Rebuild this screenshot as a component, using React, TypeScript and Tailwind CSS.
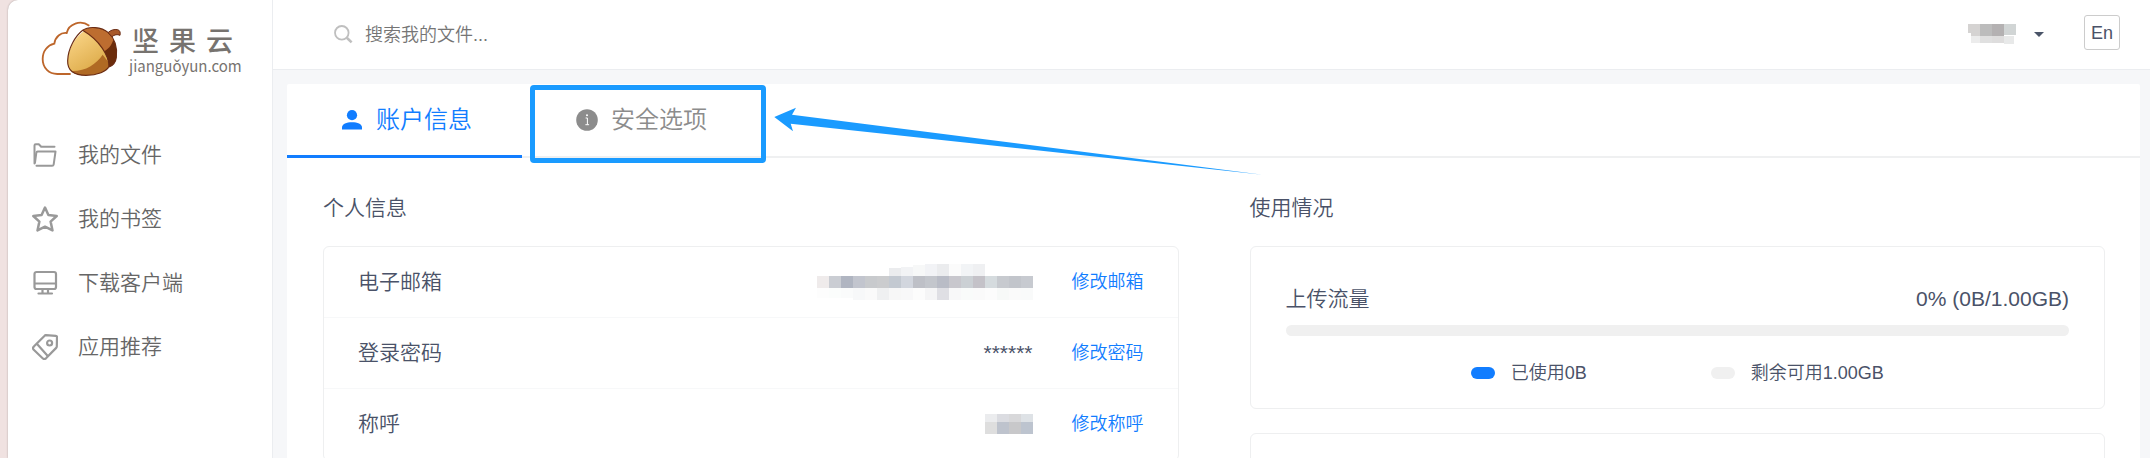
import React from "react";

type Cell = [x: number, y: number, w: number, h: number, fill: string];

const emailCells: Cell[] = [
  ...["#ebecee", "#f2f3f5", "#f7f8f8", "#f2f3f6", "#ebecee", "#fbfbfb", "#f2f4f6", "#eff0f2"].map(
    (c, i): Cell => [72 + i * 12, i < 1 ? 4 : i < 2 ? 3 : i < 3 ? 1 : 0, 12, i < 1 ? 8 : i < 2 ? 9 : i < 3 ? 11 : 12, c],
  ),
  ...["#efebeb", "#cacdd3", "#b0b5c1", "#c2c5ce", "#c8cacd", "#cbccce", "#c3c9d1", "#d2d6de", "#bec0c7", "#c3c6cc", "#b9bcc6", "#c8c7cd", "#cbd0d4", "#c4c2c8", "#d5dbde", "#c7cacf", "#c2c5cb", "#c7cad0"].map(
    (c, i): Cell => [i * 12, 12, 12, 12, c],
  ),
  ...["#fdfdfd", "#fbfdfc", "#fafbfb", "#f7f8f9", "#fafafa", "#eff0f1", "#f7f7f7", "#f8f8f9", "#fcfcfc", "#f5f5f6", "#dfdfe4", "#f8f8f9", "#f9fbfa", "#fafafa", "#fcfcfc", "#f7f9f8", "#fafafa", "#f9fafa"].map(
    (c, i): Cell => [i * 12, 24, 12, i < 3 ? 10 : 12, c],
  ),
];

const nameCells: Cell[] = [
  [0, 0, 12, 8, "#ebecee"], [12, 0, 12, 8, "#dbdce1"], [24, 0, 12, 8, "#d8d8da"], [36, 0, 12, 8, "#dee2e6"],
  [0, 8, 12, 12, "#dedede"], [12, 8, 12, 12, "#bec3cd"], [24, 8, 12, 12, "#c8c8ca"], [36, 8, 12, 12, "#bdc4cf"],
];

const userCells: Cell[] = [
  [0, 0, 12, 9, "#d5d3d2"], [3, 9, 9, 3, "#d5d3d2"], [12, 0, 12, 12, "#bcbcbc"], [24, 0, 12, 12, "#b4b1b2"], [36, 0, 12, 11, "#d1d5d5"],
  [3, 12, 9, 7, "#ececec"], [12, 12, 12, 7, "#e0e0e0"], [24, 12, 12, 7, "#dedddd"], [36, 12, 10, 8, "#e8e9e9"],
];

function Mosaic({ cells, width, height, label }: { cells: Cell[]; width: number; height: number; label: string }) {
  return (
    <svg width={width} height={height} role="img" aria-label={label} shapeRendering="crispEdges" className="shrink-0">
      {cells.map(([x, y, w, h, fill], i) => (
        <rect key={i} x={x} y={y} width={w} height={h} fill={fill} />
      ))}
    </svg>
  );
}

function AcornLogo() {
  return (
    <svg viewBox="120 60 249 174" className="h-[58px] w-[83px] shrink-0" aria-hidden="true">
      <defs>
        <linearGradient id="nut" x1="0" y1="0" x2="0.6" y2="1">
          <stop offset="0" stopColor="#fdd98d" />
          <stop offset="1" stopColor="#dba845" />
        </linearGradient>
        <clipPath id="nutClip">
          <path d="M252 93C230 108 204 145 203 182C202 212 222 226 258 226C292 226 321 214 327 199C328 165 300 120 252 93Z" />
        </clipPath>
        <clipPath id="capClip">
          <path d="M248 91C266 78 304 80 325 98C345 116 352 145 349 172C347 187 340 196 327 201C328 166 298 121 248 91Z" />
        </clipPath>
      </defs>
      <path d="M268 77C255 68 238 66 226 71C212 76 203 86 200 99C182 97 166 110 163 131C142 136 128 153 128 177C128 204 147 222 172 222L212 222" fill="none" stroke="#bd662b" strokeWidth="5.5" />
      <path d="M252 93C230 108 204 145 203 182C202 212 222 226 258 226C292 226 321 214 327 199C328 165 300 120 252 93Z" fill="url(#nut)" />
      <path d="M203 212C250 218 286 196 308 164L335 200L300 232L215 232Z" fill="#b06a24" clipPath="url(#nutClip)" />
      <path d="M248 91C266 78 304 80 325 98C345 116 352 145 349 172C347 187 340 196 327 201C328 166 298 121 248 91Z" fill="#bd6d30" />
      <path d="M342 112C338 130 330 145 311 155L328 206L356 190L354 130Z" fill="#6b2c0b" clipPath="url(#capClip)" />
      <path d="M248 91C266 78 304 80 325 98C345 116 352 145 349 172C347 187 340 196 327 201C328 166 298 121 248 91C226 108 204 145 203 182C202 212 222 226 258 226C292 226 321 214 327 199" fill="none" stroke="#6b2c14" strokeWidth="3.5" />
      <path d="M324 98C332 90 343 87 353 89C360 91 362 98 360 106C352 102 343 104 336 110Z" fill="#a8592a" stroke="#6b2c14" strokeWidth="3" />
    </svg>
  );
}

const iconProps = {
  viewBox: "0 0 26 26",
  fill: "none",
  stroke: "#999",
  strokeWidth: 2.2,
  strokeLinecap: "round" as const,
  strokeLinejoin: "round" as const,
  className: "size-[26px] shrink-0",
  "aria-hidden": true,
};

const navItems = [
  {
    label: "我的文件",
    icon: (
      <svg {...iconProps} strokeWidth={2}>
        <path d="M2.5 21.5V3.5q0-1.2 1.2-1.2h3.1l2.4 2.5H22.5" />
        <path d="M3 20.5L4.3 10.8Q4.5 9.6 5.7 9.6H23.5L21.7 22.3Q21.5 23.7 20.1 23.7H4.5" />
      </svg>
    ),
  },
  {
    label: "我的书签",
    icon: (
      <svg {...iconProps} strokeWidth={2.5}>
        <path d="M13 1.6L16.4 9.1L24.7 10L18.6 15.6L20.5 24.4L13 20.7L5.5 24.4L7.4 15.6L1.3 10L9.6 9.1Z" />
      </svg>
    ),
  },
  {
    label: "下载客户端",
    icon: (
      <svg {...iconProps}>
        <rect x="2.5" y="2" width="21.5" height="17" rx="2" />
        <path d="M3 13.5H23.5M10.5 19.5V23M16 19.5V23M6.5 23.5H20" />
      </svg>
    ),
  },
  {
    label: "应用推荐",
    icon: (
      <svg {...iconProps}>
        <path d="M13.8 1.2L23.8 1.8Q25 1.9 25 3.1L24.8 12.6Q24.8 13.3 24.2 13.9L14 24.3Q12.2 25.8 10.6 24.3L1.5 15.5Q.3 14 1.8 12.6L12.4 1.9Q13 1.2 13.8 1.2ZM5.5 10.5L15.3 21.4" />
        <circle cx="17.6" cy="9" r="2.5" />
      </svg>
    ),
  },
];

const accountRows = [
  { label: "电子邮箱", value: <Mosaic cells={emailCells} width={216} height={36} label="已隐藏" />, action: "修改邮箱" },
  { label: "登录密码", value: <span>******</span>, action: "修改密码" },
  { label: "称呼", value: <Mosaic cells={nameCells} width={48} height={20} label="已隐藏" />, action: "修改称呼" },
];

function Sidebar() {
  return (
    <aside className="w-[265px] shrink-0 rounded-tl-[10px] border-r border-[#ebedf0] bg-white shadow-[0_0_2px_rgba(0,0,0,0.3)]">
      <a href="#home" className="flex h-[123px] items-start pt-5 pl-8">
        <AcornLogo />
        <div className="flex flex-col pt-[7px] pl-[6px] text-[#77736f]">
          <div className="flex gap-[10px] pl-[3px] text-[27px] leading-[30px] font-medium">
            <span>坚</span>
            <span>果</span>
            <span>云</span>
          </div>
          <span className="font-['Noto_Sans_CJK_SC',sans-serif] text-[15px] leading-[18px] font-normal">jianguǒyun.com</span>
        </div>
      </a>
      <nav>
        {navItems.map((item) => (
          <a key={item.label} href="#" className="flex h-16 items-center gap-5 pl-6 text-[21px] text-[#666]">
            {item.icon}
            {item.label}
          </a>
        ))}
      </nav>
    </aside>
  );
}

function Header() {
  return (
    <header className="flex h-[70px] shrink-0 items-center justify-between border-b border-[#ebedf0] bg-white pr-[30px] pl-[61px]">
      <label className="flex flex-1 items-center gap-3">
        <svg viewBox="0 0 19 19" className="size-[19px] shrink-0" fill="none" stroke="#bfbfbf" aria-hidden="true">
          <circle cx="7.8" cy="7.8" r="6.8" strokeWidth="1.8" />
          <path d="M12.8 12.8L17.6 17.4" strokeWidth="2.6" />
        </svg>
        <input type="text" aria-label="搜索" placeholder="搜索我的文件..." className="w-80 bg-transparent pt-[2px] text-[18px] outline-none placeholder:text-[#757575]" />
      </label>
      <div className="flex items-center">
        <button type="button" className="flex items-center gap-[18px]" aria-label="账户菜单">
          <Mosaic cells={userCells} width={48} height={21} label="已隐藏" />
          <svg viewBox="0 0 10 5" className="h-[5px] w-[10px]" fill="#4a5568" aria-hidden="true">
            <path d="M0 0H10L5 5Z" />
          </svg>
        </button>
        <button type="button" className="mb-1 ml-10 h-[35px] w-9 rounded-[3px] border border-[#ccc] pt-[2px] text-[18px]">
          En
        </button>
      </div>
    </header>
  );
}

function Tabs() {
  return (
    <div role="tablist" className="relative flex h-[74px] border-b-2 border-[#eff0f1] text-[24px]">
      <button type="button" role="tab" aria-selected="true" className="-mb-[2px] flex w-[235px] items-center gap-[14px] border-b-3 border-[#117dff] pl-[55px] text-[#117dff]">
        <svg viewBox="0 0 20 20" className="size-5" fill="currentColor" aria-hidden="true">
          <circle cx="10" cy="5.2" r="5.1" />
          <path d="M0 19.5V17.5C0 14 4.5 12.2 10 12.2S20 14 20 17.5V19.5Z" />
        </svg>
        账户信息
      </button>
      <button type="button" role="tab" aria-selected="false" className="relative flex w-[235px] items-center gap-[13px] pl-[54px] text-[#8c8c8c]">
        <svg viewBox="0 0 22 22" className="size-[22px]" aria-hidden="true">
          <circle cx="11" cy="11" r="10.8" fill="#8c8c8c" />
          <path d="M9.6 9H11.4V15.5M9.4 15.7H13.1" fill="none" stroke="#fff" strokeWidth="1" />
          <circle cx="11" cy="6.2" r="1" fill="#fff" />
        </svg>
        安全选项
        <span className="absolute top-px -right-[9px] -bottom-[7px] left-2 rounded-[4px] border-[5px] border-[#1a9bff]" />
      </button>
      <svg viewBox="0 0 490 70" className="pointer-events-none absolute top-[22px] left-[486px] h-[70px] w-[490px]" fill="#1a9bff" aria-hidden="true">
        <path d="M1.3 11L23 1.7L19 8.7L489.7 68.7L17.7 17.7L20 25.3Z" />
      </svg>
    </div>
  );
}

function AccountInfo() {
  return (
    <section>
      <h2 className="h-[88px] pt-[34px] text-[21px] leading-8">个人信息</h2>
      <div className="rounded-[6px] border border-[#eeeff0]">
        {accountRows.map((row) => (
          <div key={row.label} className="flex h-[71px] items-center border-b border-[#f7f8f9] px-[34px] text-[21px]">
            <span className="flex-1">{row.label}</span>
            {row.value}
            <a href="#" className="ml-[39px] text-[18px] text-[#117dff]">
              {row.action}
            </a>
          </div>
        ))}
      </div>
    </section>
  );
}

function Usage() {
  return (
    <section>
      <h2 className="h-[88px] pt-[34px] text-[21px] leading-8">使用情况</h2>
      <div className="rounded-[6px] border border-[#eeeff0] px-[35px] pt-9 pb-5">
        <div className="flex justify-between text-[21px] leading-8">
          <span>上传流量</span>
          <span>0% (0B/1.00GB)</span>
        </div>
        <div role="progressbar" aria-label="上传流量" aria-valuenow={0} className="mt-[10px] h-[11px] rounded-full bg-[#f0f0f0]" />
        <div className="mt-[22px] flex justify-center gap-[124px] text-[18px] leading-[30px]">
          <span className="flex items-center gap-4">
            <i className="h-3 w-6 rounded-full bg-[#117dff]" />
            已使用0B
          </span>
          <span className="flex items-center gap-4">
            <i className="h-3 w-6 rounded-full bg-[#f0f0f0]" />
            剩余可用1.00GB
          </span>
        </div>
      </div>
      <div className="mt-6 h-40 rounded-[6px] border border-[#eeeff0]" />
    </section>
  );
}

export default function App() {
  return (
    <div className="flex h-screen overflow-hidden bg-[#f0e2e1] pl-2 font-['Liberation_Sans','Noto_Sans_CJK_SC',sans-serif] font-[350] text-[#4a5268]">
      <Sidebar />
      <div className="flex min-w-0 flex-1 flex-col bg-[#f6f7f9]">
        <Header />
        <main className="mt-[14px] mr-[10px] ml-[14px] flex-1 rounded-t-[2px] bg-white">
          <Tabs />
          <div className="grid grid-cols-2 gap-[71px] pr-[35px] pl-9">
            <AccountInfo />
            <Usage />
          </div>
        </main>
      </div>
    </div>
  );
}
